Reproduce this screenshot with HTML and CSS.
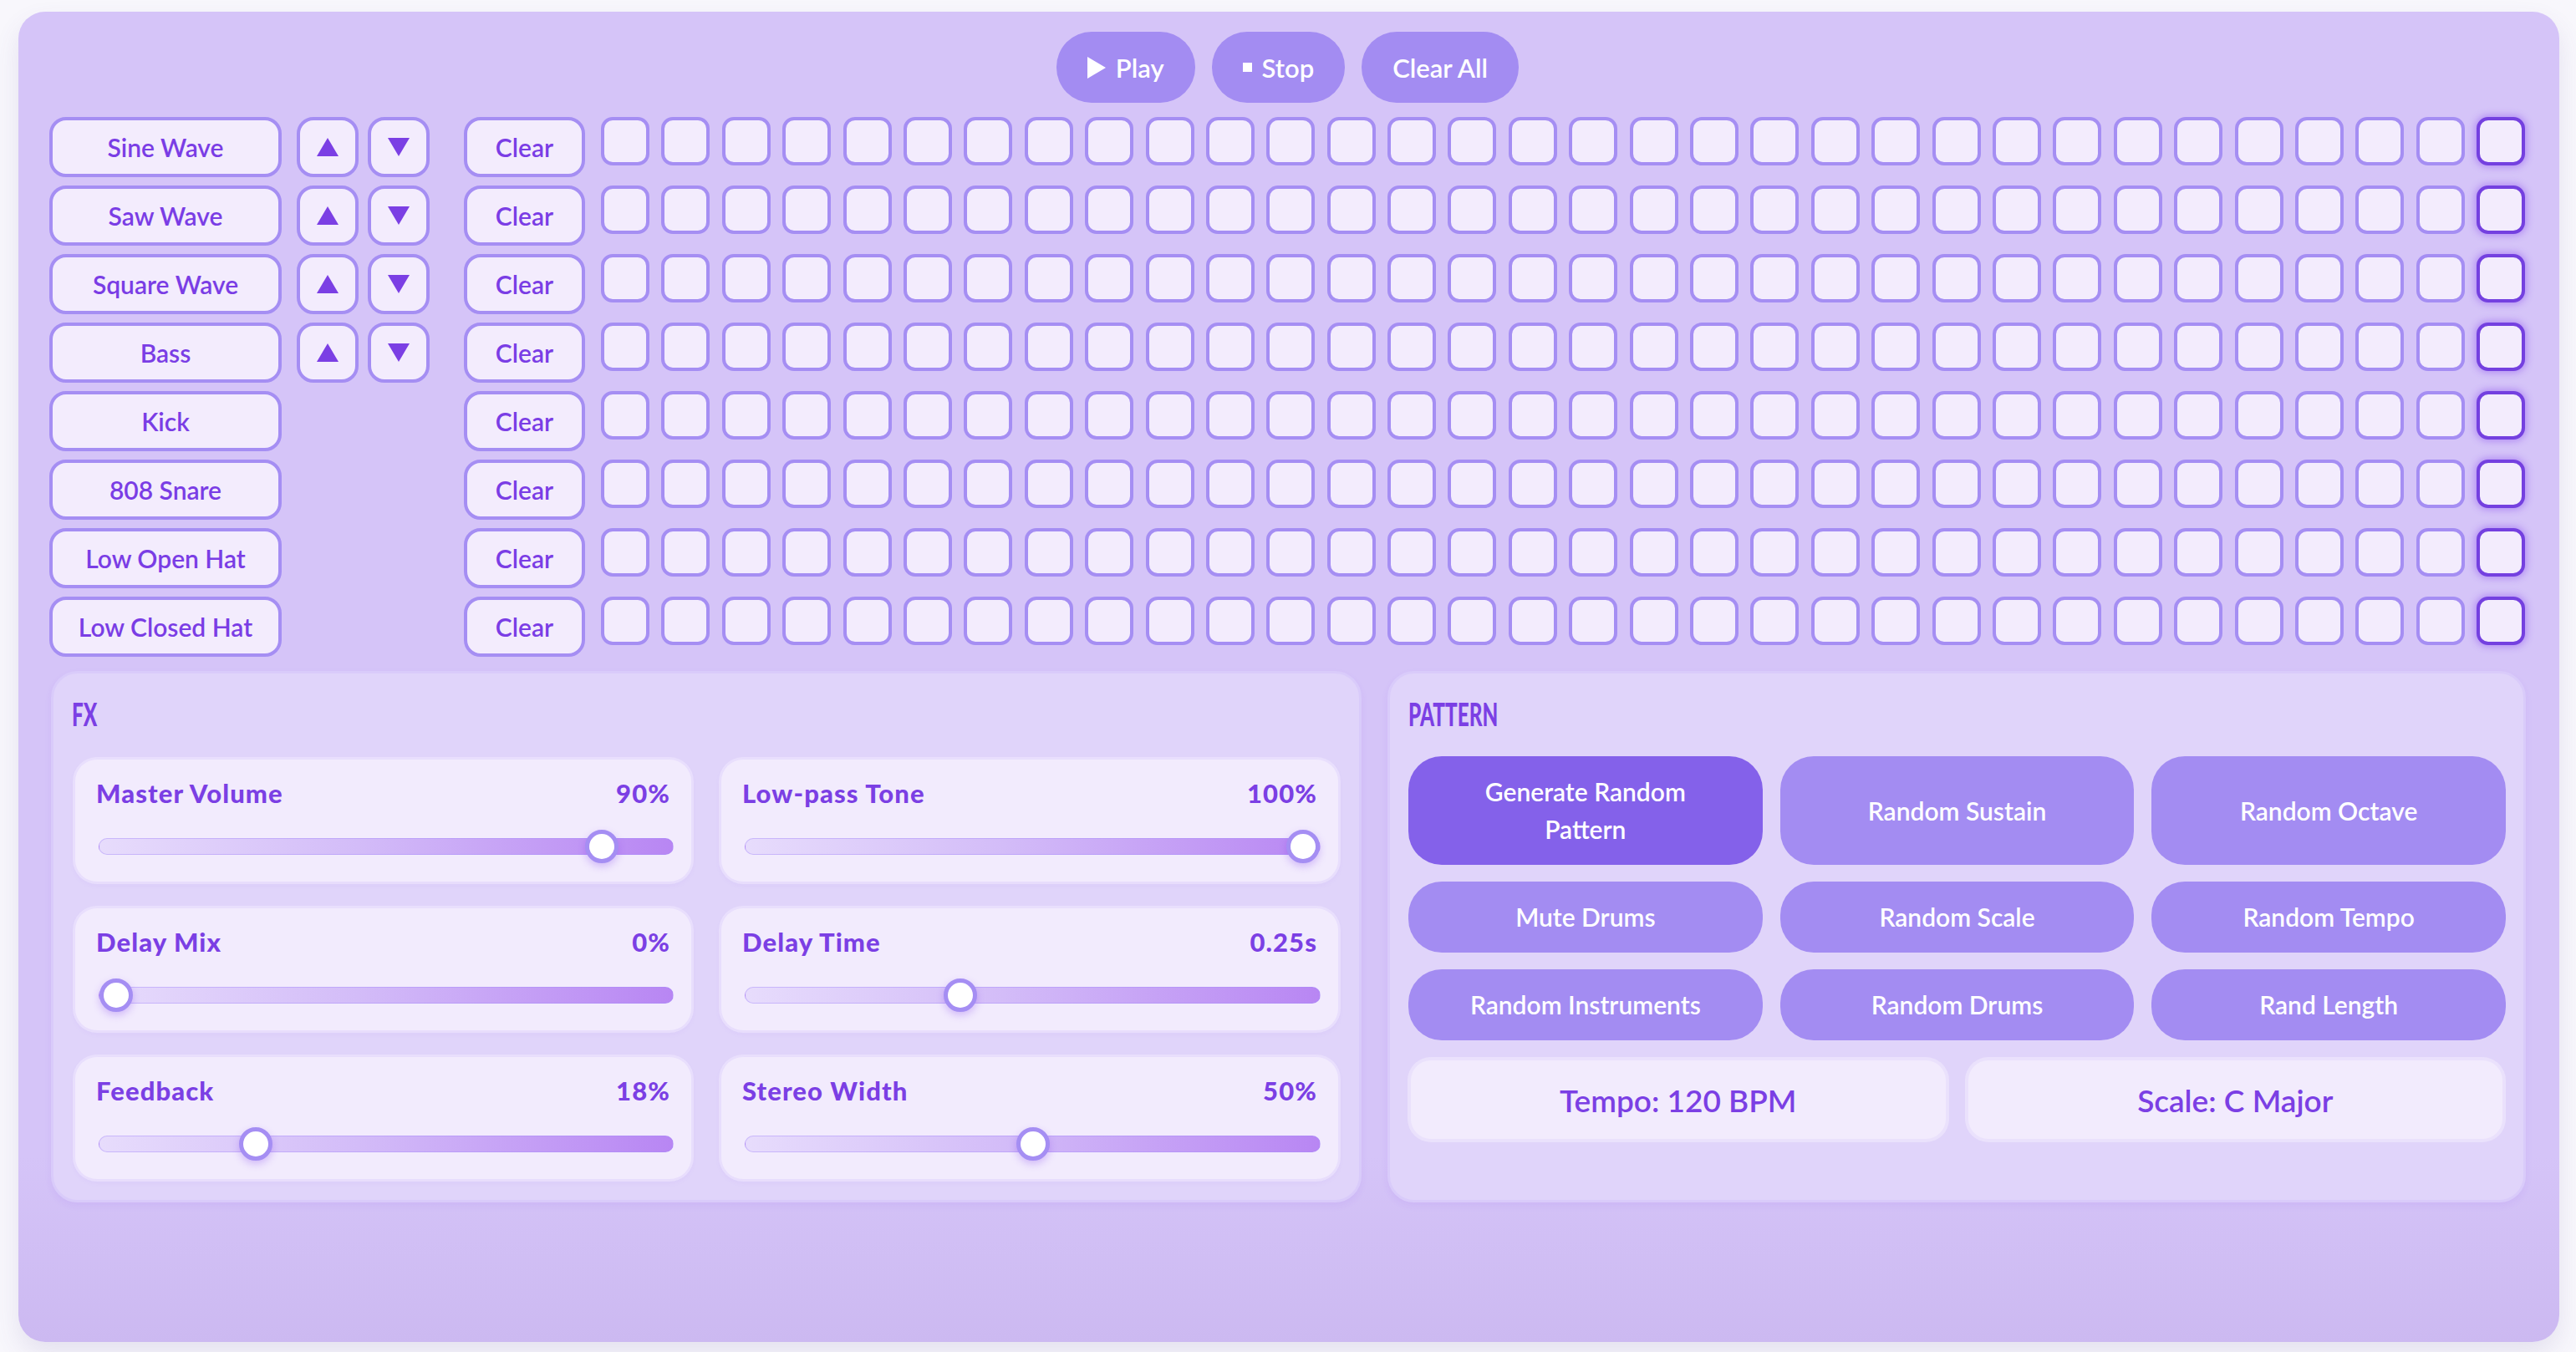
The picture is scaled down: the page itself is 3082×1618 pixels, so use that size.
FILE: index.html
```html
<!DOCTYPE html>
<html lang="en">
<head>
<meta charset="utf-8">
<title>Sequencer</title>
<link rel="stylesheet" href="styles.css">
</head>
<body>
<div class="page">
  <main class="app">
    <div class="transport">
      <button class="tbtn"><svg class="ico" width="22" height="26" viewBox="0 0 22 26"><polygon points="0,0 22,13 0,26" fill="#fff"/></svg>Play</button>
      <button class="tbtn"><svg class="ico" width="11" height="11" viewBox="0 0 11 11"><rect width="11" height="11" fill="#fff"/></svg>Stop</button>
      <button class="tbtn">Clear All</button>
    </div>

    <div class="tracks">
      <div class="track">
        <button class="inst">Sine Wave</button>
        <div class="arrows">
          <button class="arrow"><svg width="26" height="22" viewBox="0 0 26 22"><polygon points="13,0 26,22 0,22" fill="#7b3fe4"/></svg></button>
          <button class="arrow"><svg width="26" height="22" viewBox="0 0 26 22"><polygon points="0,0 26,0 13,22" fill="#7b3fe4"/></svg></button>
        </div>
        <button class="clear">Clear</button>
        <div class="cells"><span class="cell"></span><span class="cell"></span><span class="cell"></span><span class="cell"></span><span class="cell"></span><span class="cell"></span><span class="cell"></span><span class="cell"></span><span class="cell"></span><span class="cell"></span><span class="cell"></span><span class="cell"></span><span class="cell"></span><span class="cell"></span><span class="cell"></span><span class="cell"></span><span class="cell"></span><span class="cell"></span><span class="cell"></span><span class="cell"></span><span class="cell"></span><span class="cell"></span><span class="cell"></span><span class="cell"></span><span class="cell"></span><span class="cell"></span><span class="cell"></span><span class="cell"></span><span class="cell"></span><span class="cell"></span><span class="cell"></span><span class="cell now"></span></div>
      </div>
      <div class="track">
        <button class="inst">Saw Wave</button>
        <div class="arrows">
          <button class="arrow"><svg width="26" height="22" viewBox="0 0 26 22"><polygon points="13,0 26,22 0,22" fill="#7b3fe4"/></svg></button>
          <button class="arrow"><svg width="26" height="22" viewBox="0 0 26 22"><polygon points="0,0 26,0 13,22" fill="#7b3fe4"/></svg></button>
        </div>
        <button class="clear">Clear</button>
        <div class="cells"><span class="cell"></span><span class="cell"></span><span class="cell"></span><span class="cell"></span><span class="cell"></span><span class="cell"></span><span class="cell"></span><span class="cell"></span><span class="cell"></span><span class="cell"></span><span class="cell"></span><span class="cell"></span><span class="cell"></span><span class="cell"></span><span class="cell"></span><span class="cell"></span><span class="cell"></span><span class="cell"></span><span class="cell"></span><span class="cell"></span><span class="cell"></span><span class="cell"></span><span class="cell"></span><span class="cell"></span><span class="cell"></span><span class="cell"></span><span class="cell"></span><span class="cell"></span><span class="cell"></span><span class="cell"></span><span class="cell"></span><span class="cell now"></span></div>
      </div>
      <div class="track">
        <button class="inst">Square Wave</button>
        <div class="arrows">
          <button class="arrow"><svg width="26" height="22" viewBox="0 0 26 22"><polygon points="13,0 26,22 0,22" fill="#7b3fe4"/></svg></button>
          <button class="arrow"><svg width="26" height="22" viewBox="0 0 26 22"><polygon points="0,0 26,0 13,22" fill="#7b3fe4"/></svg></button>
        </div>
        <button class="clear">Clear</button>
        <div class="cells"><span class="cell"></span><span class="cell"></span><span class="cell"></span><span class="cell"></span><span class="cell"></span><span class="cell"></span><span class="cell"></span><span class="cell"></span><span class="cell"></span><span class="cell"></span><span class="cell"></span><span class="cell"></span><span class="cell"></span><span class="cell"></span><span class="cell"></span><span class="cell"></span><span class="cell"></span><span class="cell"></span><span class="cell"></span><span class="cell"></span><span class="cell"></span><span class="cell"></span><span class="cell"></span><span class="cell"></span><span class="cell"></span><span class="cell"></span><span class="cell"></span><span class="cell"></span><span class="cell"></span><span class="cell"></span><span class="cell"></span><span class="cell now"></span></div>
      </div>
      <div class="track">
        <button class="inst">Bass</button>
        <div class="arrows">
          <button class="arrow"><svg width="26" height="22" viewBox="0 0 26 22"><polygon points="13,0 26,22 0,22" fill="#7b3fe4"/></svg></button>
          <button class="arrow"><svg width="26" height="22" viewBox="0 0 26 22"><polygon points="0,0 26,0 13,22" fill="#7b3fe4"/></svg></button>
        </div>
        <button class="clear">Clear</button>
        <div class="cells"><span class="cell"></span><span class="cell"></span><span class="cell"></span><span class="cell"></span><span class="cell"></span><span class="cell"></span><span class="cell"></span><span class="cell"></span><span class="cell"></span><span class="cell"></span><span class="cell"></span><span class="cell"></span><span class="cell"></span><span class="cell"></span><span class="cell"></span><span class="cell"></span><span class="cell"></span><span class="cell"></span><span class="cell"></span><span class="cell"></span><span class="cell"></span><span class="cell"></span><span class="cell"></span><span class="cell"></span><span class="cell"></span><span class="cell"></span><span class="cell"></span><span class="cell"></span><span class="cell"></span><span class="cell"></span><span class="cell"></span><span class="cell now"></span></div>
      </div>
      <div class="track">
        <button class="inst">Kick</button>
        <div class="arrows"></div>
        <button class="clear">Clear</button>
        <div class="cells"><span class="cell"></span><span class="cell"></span><span class="cell"></span><span class="cell"></span><span class="cell"></span><span class="cell"></span><span class="cell"></span><span class="cell"></span><span class="cell"></span><span class="cell"></span><span class="cell"></span><span class="cell"></span><span class="cell"></span><span class="cell"></span><span class="cell"></span><span class="cell"></span><span class="cell"></span><span class="cell"></span><span class="cell"></span><span class="cell"></span><span class="cell"></span><span class="cell"></span><span class="cell"></span><span class="cell"></span><span class="cell"></span><span class="cell"></span><span class="cell"></span><span class="cell"></span><span class="cell"></span><span class="cell"></span><span class="cell"></span><span class="cell now"></span></div>
      </div>
      <div class="track">
        <button class="inst">808 Snare</button>
        <div class="arrows"></div>
        <button class="clear">Clear</button>
        <div class="cells"><span class="cell"></span><span class="cell"></span><span class="cell"></span><span class="cell"></span><span class="cell"></span><span class="cell"></span><span class="cell"></span><span class="cell"></span><span class="cell"></span><span class="cell"></span><span class="cell"></span><span class="cell"></span><span class="cell"></span><span class="cell"></span><span class="cell"></span><span class="cell"></span><span class="cell"></span><span class="cell"></span><span class="cell"></span><span class="cell"></span><span class="cell"></span><span class="cell"></span><span class="cell"></span><span class="cell"></span><span class="cell"></span><span class="cell"></span><span class="cell"></span><span class="cell"></span><span class="cell"></span><span class="cell"></span><span class="cell"></span><span class="cell now"></span></div>
      </div>
      <div class="track">
        <button class="inst">Low Open Hat</button>
        <div class="arrows"></div>
        <button class="clear">Clear</button>
        <div class="cells"><span class="cell"></span><span class="cell"></span><span class="cell"></span><span class="cell"></span><span class="cell"></span><span class="cell"></span><span class="cell"></span><span class="cell"></span><span class="cell"></span><span class="cell"></span><span class="cell"></span><span class="cell"></span><span class="cell"></span><span class="cell"></span><span class="cell"></span><span class="cell"></span><span class="cell"></span><span class="cell"></span><span class="cell"></span><span class="cell"></span><span class="cell"></span><span class="cell"></span><span class="cell"></span><span class="cell"></span><span class="cell"></span><span class="cell"></span><span class="cell"></span><span class="cell"></span><span class="cell"></span><span class="cell"></span><span class="cell"></span><span class="cell now"></span></div>
      </div>
      <div class="track">
        <button class="inst">Low Closed Hat</button>
        <div class="arrows"></div>
        <button class="clear">Clear</button>
        <div class="cells"><span class="cell"></span><span class="cell"></span><span class="cell"></span><span class="cell"></span><span class="cell"></span><span class="cell"></span><span class="cell"></span><span class="cell"></span><span class="cell"></span><span class="cell"></span><span class="cell"></span><span class="cell"></span><span class="cell"></span><span class="cell"></span><span class="cell"></span><span class="cell"></span><span class="cell"></span><span class="cell"></span><span class="cell"></span><span class="cell"></span><span class="cell"></span><span class="cell"></span><span class="cell"></span><span class="cell"></span><span class="cell"></span><span class="cell"></span><span class="cell"></span><span class="cell"></span><span class="cell"></span><span class="cell"></span><span class="cell"></span><span class="cell now"></span></div>
      </div>
    </div>

    <div class="bottom">
      <section class="panel fx">
        <h2 class="ptitle"><span class="ttext">FX</span></h2>
        <div class="sliders">
          <div class="card">
            <div class="lbl"><span>Master Volume</span><span>90%</span></div>
            <div class="bar"><span class="thumb" style="left: calc((100% - 40px) * 0.9)"></span></div>
          </div>
          <div class="card">
            <div class="lbl"><span>Low-pass Tone</span><span>100%</span></div>
            <div class="bar"><span class="thumb" style="left: calc((100% - 40px) * 1)"></span></div>
          </div>
          <div class="card">
            <div class="lbl"><span>Delay Mix</span><span>0%</span></div>
            <div class="bar"><span class="thumb" style="left: calc((100% - 40px) * 0)"></span></div>
          </div>
          <div class="card">
            <div class="lbl"><span>Delay Time</span><span>0.25s</span></div>
            <div class="bar"><span class="thumb" style="left: calc((100% - 40px) * 0.366)"></span></div>
          </div>
          <div class="card">
            <div class="lbl"><span>Feedback</span><span>18%</span></div>
            <div class="bar"><span class="thumb" style="left: calc((100% - 40px) * 0.259)"></span></div>
          </div>
          <div class="card">
            <div class="lbl"><span>Stereo Width</span><span>50%</span></div>
            <div class="bar"><span class="thumb" style="left: calc((100% - 40px) * 0.5)"></span></div>
          </div>
        </div>
      </section>

      <section class="panel pattern">
        <h2 class="ptitle"><span class="ttext">PATTERN</span></h2>
        <div class="pbtns">
          <button class="pbtn primary">Generate Random Pattern</button>
          <button class="pbtn">Random Sustain</button>
          <button class="pbtn">Random Octave</button>
          <button class="pbtn">Mute Drums</button>
          <button class="pbtn">Random Scale</button>
          <button class="pbtn">Random Tempo</button>
          <button class="pbtn">Random Instruments</button>
          <button class="pbtn">Random Drums</button>
          <button class="pbtn">Rand Length</button>
        </div>
        <div class="status">
          <div class="sbox">Tempo: 120 BPM</div>
          <div class="sbox">Scale: C Major</div>
        </div>
      </section>
    </div>
  </main>
</div>
</body>
</html>
```

FILE: styles.css
```css
* { box-sizing: border-box; }

html, body { margin: 0; }

body {
  background: #f8f7fc;
  font-family: Lato, "Noto Sans", sans-serif;
  color: #7b3fe4;
}

button {
  font-family: inherit;
  cursor: pointer;
}

.page {
  padding: 14px 20px 12px 22px;
}

.app {
  height: 1592px;
  border-radius: 32px;
  background: linear-gradient(180deg, #d5c4f8 0%, #d5c4f8 86%, #ccb9f1 100%);
  box-shadow: 0 14px 30px rgba(90, 70, 150, 0.12);
  padding: 24px 40px 0 37px;
}

/* transport */
.transport {
  display: flex;
  justify-content: center;
  gap: 20px;
}

.tbtn {
  height: 85px;
  padding: 0 37px;
  border: 0;
  border-radius: 42px;
  background: #a38cf2;
  color: #fff;
  font-size: 31px;
  font-weight: 600;
  display: inline-flex;
  align-items: center;
  gap: 12px;
}

.ico { display: block; }

/* tracks */
.tracks {
  margin-top: 17px;
  display: flex;
  flex-direction: column;
  gap: 10px;
}

.track {
  display: flex;
  align-items: flex-start;
  height: 72px;
}

.inst, .arrow, .clear {
  height: 72px;
  border: 4px solid #a58ef3;
  border-radius: 20px;
  background: #f3ecfd;
  color: #7a3de5;
  font-size: 30px;
  font-weight: 600;
  display: flex;
  align-items: center;
  justify-content: center;
  padding: 0;
}

.inst { width: 278px; }

.arrows {
  width: 159px;
  margin-left: 18px;
  display: flex;
  gap: 11px;
}

.arrow { width: 74px; }
.arrow svg { display: block; }

.clear {
  width: 145px;
  margin-left: 41px;
}

.cells {
  margin-left: 19px;
  display: grid;
  grid-template-columns: repeat(32, 58px);
  column-gap: 14.4px;
}

.cell {
  width: 58px;
  height: 58px;
  border: 4px solid #a58ef3;
  border-radius: 14px;
  background: #f3ecfd;
}

.cell.now {
  border-color: #7440e0;
  box-shadow: 0 0 8px 2px rgba(124, 58, 237, 0.4);
}

/* bottom panels */
.bottom {
  margin-top: 17px;
  margin-left: 2px;
  height: 636px;
  display: grid;
  grid-template-columns: 1568px 1fr;
  column-gap: 31px;
}

.panel {
  background: #e0d4fa;
  border: 3px solid #d9cbfa;
  border-radius: 32px;
  box-shadow: 0 4px 8px rgba(124, 58, 237, 0.07);
}

.ptitle {
  margin: 0;
  font-family: Lato, "Liberation Sans", sans-serif;
  font-weight: 900;
  font-size: 38px;
  line-height: 40px;
  color: #7b3fe4;
}

.ttext {
  display: inline-block;
  transform: scaleX(0.64);
  transform-origin: left center;
}

.fx {
  padding: 28px 25px 0 22px;
}

.fx .ptitle { margin-bottom: 35px; }

.fx .sliders { margin-left: 4px; }

.sliders {
  display: grid;
  grid-template-columns: 737px 1fr;
  column-gap: 36px;
  row-gap: 32px;
}

.card {
  height: 146px;
  background: #f2ebfd;
  border-radius: 26px;
  padding: 22px 25px 0 25px;
  box-shadow: 0 0 0 3px rgba(236, 228, 253, 0.7), 0 3px 8px rgba(124, 58, 237, 0.06);
}

.lbl {
  display: flex;
  justify-content: space-between;
  font-size: 31px;
  font-weight: 900;
  line-height: 36px;
  letter-spacing: 1.1px;
}

.bar {
  position: relative;
  margin: 36px -4px 0 3px;
  height: 20px;
  border-radius: 10px;
  border: 1px solid rgba(167, 139, 250, 0.45);
  background: linear-gradient(90deg, #e7dcfc 0%, #d3bcf8 45%, #b886f3 100%);
}

.thumb {
  position: absolute;
  top: -11px;
  width: 40px;
  height: 40px;
  border-radius: 50%;
  background: #fff;
  border: 5px solid #a58ef3;
  box-shadow: 0 4px 10px rgba(124, 58, 237, 0.28);
}

.pattern {
  padding: 28px 21px 0 22px;
}

.pattern .ptitle { margin-bottom: 31px; }

.pbtns {
  display: grid;
  grid-template-columns: repeat(3, 1fr);
  column-gap: 21px;
  row-gap: 20px;
}

.pbtn {
  border: 0;
  border-radius: 40px;
  background: #a38cf2;
  color: #fff;
  font-size: 30px;
  font-weight: 600;
  line-height: 45px;
  padding: 20px 48px;
}

.pbtn.primary { background: #8461ea; }

.status {
  margin: 24px 4px 0 3px;
  display: grid;
  grid-template-columns: 1fr 1fr;
  column-gap: 27px;
}

.sbox {
  height: 94px;
  border-radius: 24px;
  background: #f2ebfd;
  box-shadow: 0 0 0 4px rgba(236, 228, 253, 0.8);
  display: flex;
  align-items: center;
  justify-content: center;
  font-size: 37px;
  font-weight: 600;
}
```
